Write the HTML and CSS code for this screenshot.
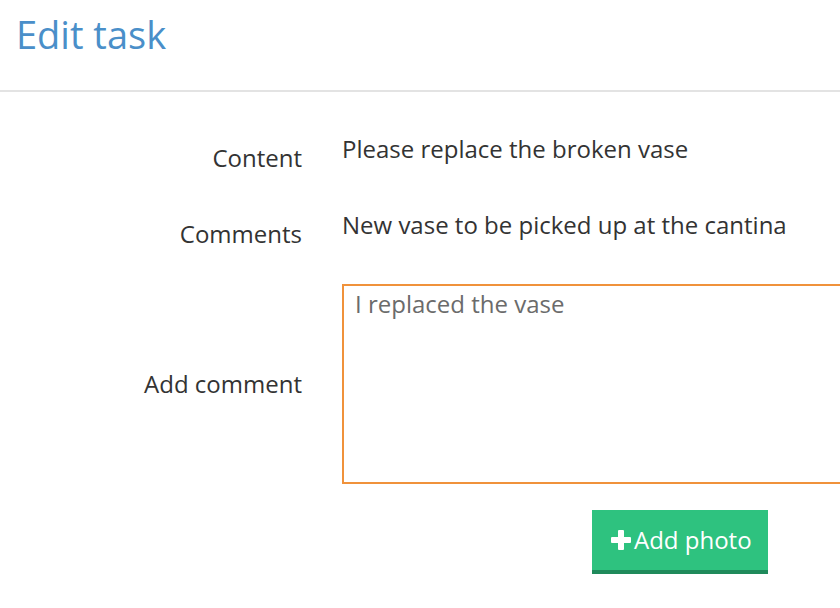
FILE: index.html
```html
<!DOCTYPE html>
<html lang="en">
<head>
<meta charset="utf-8">
<title>Edit task</title>
<link rel="stylesheet" href="styles.css">
</head>
<body>
<header class="page-header">
  <h1 class="page-title">Edit task</h1>
</header>
<main class="task-form">
  <div class="row row-content">
    <div class="label">Content</div>
    <div class="value">Please replace the broken vase</div>
  </div>
  <div class="row row-comments">
    <div class="label">Comments</div>
    <div class="value">New vase to be picked up at the cantina</div>
  </div>
  <div class="row row-add">
    <label class="label label-center" for="comment">Add comment</label>
    <textarea id="comment" class="comment-box" placeholder="I replaced the vase"></textarea>
  </div>
  <div class="actions">
    <button class="btn-photo" type="button">
      <svg class="plus" width="22" height="22" viewBox="0 0 22 22" aria-hidden="true">
        <rect x="8" y="1" width="6" height="20" rx="1" fill="#fff"/>
        <rect x="1" y="8" width="20" height="6" rx="1" fill="#fff"/>
      </svg>
      <span>Add photo</span>
    </button>
  </div>
</main>
</body>
</html>
```

FILE: styles.css
```css
* { box-sizing: border-box; }

html, body {
  margin: 0;
  padding: 0;
  background: #ffffff;
  overflow: hidden;
}

body {
  font-family: "Open Sans", "DejaVu Sans", sans-serif;
  color: #333333;
  width: 840px;
  height: 608px;
}

.page-header {
  height: 92px;
  border-bottom: 2px solid #e3e3e3;
  padding: 8px 16px 0;
}

.page-title {
  margin: 0;
  font-weight: 400;
  font-size: 38px;
  line-height: 52px;
  color: #4a8fc9;
}

.task-form {
  padding-top: 41px;
}

.row {
  display: grid;
  grid-template-columns: 302px 1fr;
  column-gap: 40px;
  align-items: start;
  font-size: 24px;
  line-height: 32px;
}

.row-comments {
  margin-top: 35px;
}

.row-add {
  margin-top: 34px;
  align-items: center;
}

.label {
  text-align: right;
  padding-top: 9px;
  color: #333333;
}

.label-center {
  padding-top: 0;
}

.value {
  color: #333333;
  white-space: nowrap;
}

.comment-box {
  display: block;
  width: 520px;
  height: 200px;
  border: 2px solid #f0923b;
  border-radius: 0;
  padding: 2px 11px;
  font-family: "Open Sans", "DejaVu Sans", sans-serif;
  font-size: 24px;
  line-height: 32px;
  color: #666666;
  resize: none;
  outline: none;
}

.comment-box::placeholder {
  color: #6b6b6b;
  opacity: 1;
}

.actions {
  display: flex;
  padding-left: 592px;
  margin-top: 26px;
}

.btn-photo {
  display: flex;
  align-items: center;
  gap: 2px;
  width: 176px;
  height: 64px;
  padding: 0 0 0 18px;
  border: 0;
  border-bottom: 4px solid #1f8a5b;
  background: #2ec27f;
  color: #ffffff;
  font-family: "Open Sans", "DejaVu Sans", sans-serif;
  font-size: 24px;
  line-height: 30px;
  cursor: pointer;
}

.plus {
  flex: none;
}
```
